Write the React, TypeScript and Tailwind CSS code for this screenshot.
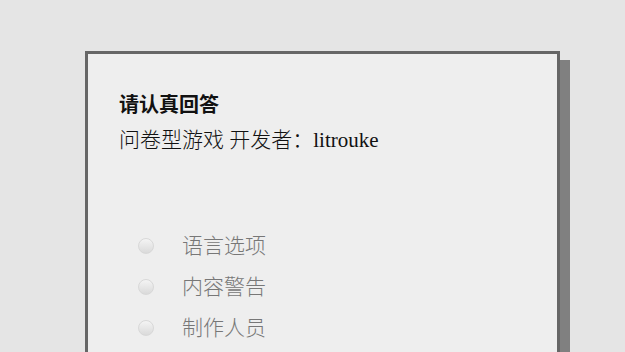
const items = ["语言选项", "内容警告", "制作人员"];

export default function App() {
  return (
    <div
      className="h-[352px] w-[625px] overflow-hidden bg-[#e5e5e5] pl-[85px] pt-[51px]"
      style={{ fontFamily: '"Liberation Serif", "Noto Sans CJK SC", serif' }}
    >
      <div className="h-[400px] w-[475px] border-[3px] border-[#666] bg-[#eeeeee] pl-[31px] pt-[36px] shadow-[10px_9px_0_#808080]">
        <h1
          className="text-[20px] font-bold leading-[28px] text-[#111]"
          style={{ fontFamily: '"Noto Sans CJK SC", sans-serif' }}
        >
          请认真回答
        </h1>
        <p className="mt-[8px] text-[21px] font-light leading-[28px] text-[#111]">
          问卷型游戏 开发者：litrouke
        </p>

        <ul className="mt-[78px] flex flex-col gap-[13px] pl-[19px]">
          {items.map((t) => (
            <li key={t} className="flex h-[28px] items-center">
              <span className="h-[16px] w-[16px] rounded-full border border-[#d8d8d8] bg-gradient-to-b from-[#f4f4f4] to-[#dadada]" />
              <span className="ml-[28px] text-[21px] font-light leading-[28px] text-[#777]">{t}</span>
            </li>
          ))}
        </ul>
      </div>
    </div>
  );
}
